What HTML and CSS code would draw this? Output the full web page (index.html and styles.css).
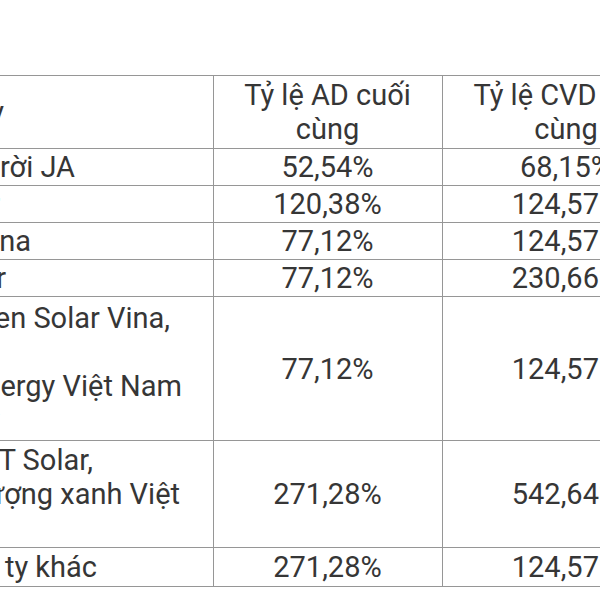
FILE: index.html
```html
<!DOCTYPE html>
<html lang="vi">
<head>
    <meta charset="UTF-8">
    <meta name="viewport" content="width=device-width, initial-scale=1.0">
    <title>Thuế chống bán phá giá pin mặt trời</title>
    <link rel="stylesheet" href="styles.css">
</head>
<body>
    <main class="page">
        <table class="duty-table">
            <colgroup>
                <col class="col-name">
                <col class="col-ad">
                <col class="col-cvd">
            </colgroup>
            <thead>
                <tr>
                    <th class="name">
                        <div class="tail end-4">Công ty</div>
                    </th>
                    <th>Tỷ lệ AD cuối cùng</th>
                    <th>Tỷ lệ CVD cuối cùng</th>
                </tr>
            </thead>
            <tbody>
                <tr>
                    <td class="name">
                        <div class="tail end-75">Công ty TNHH Năng lượng mặt trời JA</div>
                    </td>
                    <td>52,54%</td>
                    <td>68,15%</td>
                </tr>
                <tr>
                    <td class="name">
                        <div class="tail end-0">Boviet Solar</div>
                    </td>
                    <td>120,38%</td>
                    <td>124,57%</td>
                </tr>
                <tr>
                    <td class="name">
                        <div class="tail end-31">Trina Solar Vina</div>
                    </td>
                    <td>77,12%</td>
                    <td>124,57%</td>
                </tr>
                <tr>
                    <td class="name">
                        <div class="tail end-6">Jinko Solar</div>
                    </td>
                    <td>77,12%</td>
                    <td>230,66%</td>
                </tr>
                <tr class="row-tall">
                    <td class="name">
                        <div class="tail end-170">Công ty TNHH Green Solar Vina,</div>
                        <div class="tail end-0">Công ty TNHH</div>
                        <div class="tail end-182">Runergy PV Energy Việt Nam</div>
                        <div class="tail end-0">và các công ty</div>
                    </td>
                    <td>77,12%</td>
                    <td>124,57%</td>
                </tr>
                <tr class="row-mid">
                    <td class="name">
                        <div class="tail end-93">Công ty TNHH ACT Solar,</div>
                        <div class="tail end-180">Công ty năng lượng xanh Việt</div>
                        <div class="tail end-0">Nam</div>
                    </td>
                    <td>271,28%</td>
                    <td>542,64%</td>
                </tr>
                <tr class="row-last">
                    <td class="name">
                        <div class="tail end-97">Các công ty khác</div>
                    </td>
                    <td>271,28%</td>
                    <td>124,57%</td>
                </tr>
            </tbody>
        </table>
    </main>
</body>
</html>
```

FILE: styles.css
```css
* {
    margin: 0;
    padding: 0;
    box-sizing: border-box;
}

html, body {
    background-color: #fff;
    overflow: hidden;
}

body {
    font-family: Roboto, 'Noto Sans', sans-serif;
    color: #363636;
}

.page {
    padding-top: 75px;
    width: 600px;
    height: 600px;
    overflow: hidden;
}

.duty-table {
    border-collapse: collapse;
    table-layout: fixed;
    width: 690px;
    font-size: 29px;
    line-height: 34px;
}

.col-name {
    width: 213px;
}

.col-ad {
    width: 229px;
}

.col-cvd {
    width: 248px;
}

.duty-table th,
.duty-table td {
    border: 1px solid #969696;
    padding: 1px 8px;
    text-align: center;
    vertical-align: middle;
    font-weight: normal;
}

.duty-table th {
    padding-top: 2px;
    padding-bottom: 2px;
}

.duty-table .name {
    border-left: none;
    padding-left: 0;
    padding-right: 0;
    text-align: left;
}

.row-tall td {
    padding-top: 4px;
    padding-bottom: 3px;
}

.row-mid td,
.row-last td {
    padding-top: 2px;
    padding-bottom: 2px;
}

/* each line of the name column is pinned by its right end,
   the start runs off the left edge of the crop */
.tail {
    display: flex;
    justify-content: flex-end;
    white-space: nowrap;
}

.end-0 { width: 0; }
.end-4 { width: 4px; }
.end-6 { width: 6px; }
.end-31 { width: 31px; }
.end-75 { width: 75px; }
.end-93 { width: 93px; }
.end-97 { width: 97px; }
.end-170 { width: 170px; }
.end-180 { width: 180px; }
.end-182 { width: 182px; }
```
